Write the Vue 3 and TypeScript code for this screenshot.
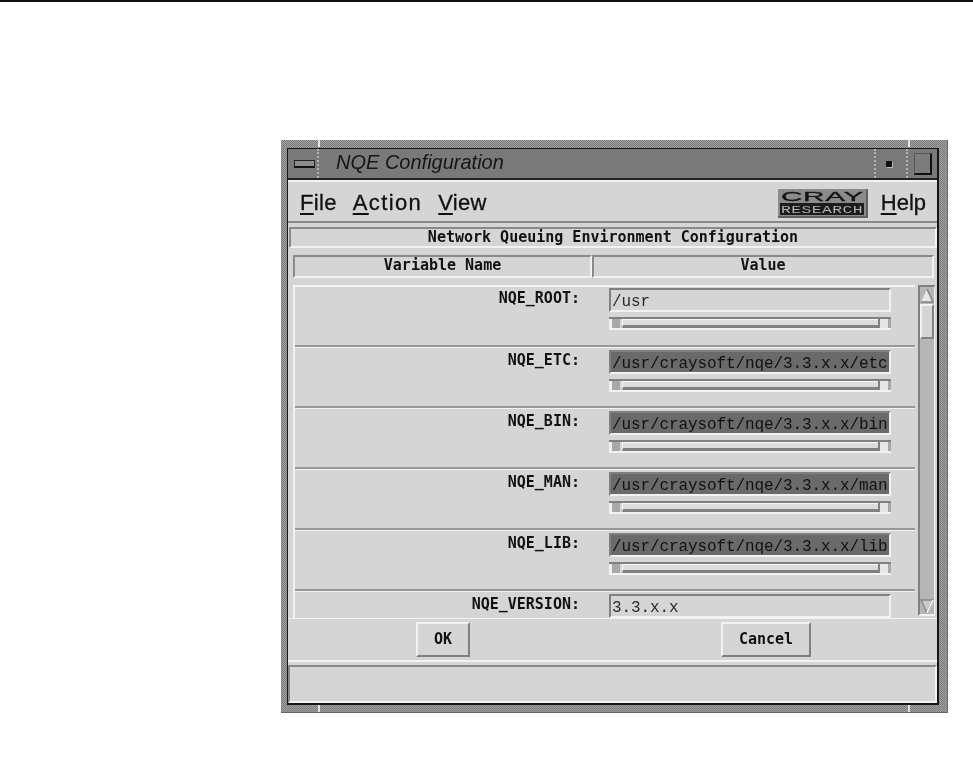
<script setup lang="ts">
interface ConfigRow {
  name: string
  value: string
  locked: boolean
}

const rows: ConfigRow[] = [
  { name: 'NQE_ROOT:', value: '/usr', locked: false },
  { name: 'NQE_ETC:', value: '/usr/craysoft/nqe/3.3.x.x/etc', locked: true },
  { name: 'NQE_BIN:', value: '/usr/craysoft/nqe/3.3.x.x/bin', locked: true },
  { name: 'NQE_MAN:', value: '/usr/craysoft/nqe/3.3.x.x/man', locked: true },
  { name: 'NQE_LIB:', value: '/usr/craysoft/nqe/3.3.x.x/lib', locked: true },
  { name: 'NQE_VERSION:', value: '3.3.x.x', locked: false }
]
</script>

<template>
  <div class="page">
    <div class="rule"></div>
    <div class="window">
      <i class="notch notch-tl"></i>
      <i class="notch notch-tr"></i>
      <i class="notch notch-bl"></i>
      <i class="notch notch-br"></i>
      <div class="client">
        <div class="titlebar">
          <div class="wm-btn wm-menu"><span class="menu-bar"></span></div>
          <div class="title">NQE Configuration</div>
          <div class="wm-btn wm-min"><span class="min-dot"></span></div>
          <div class="wm-btn wm-max"><span class="max-box"></span></div>
        </div>

        <div class="menubar">
          <span class="menu-item"><u>F</u>ile</span>
          <span class="menu-item action-menu"><u>A</u>ction</span>
          <span class="menu-item"><u>V</u>iew</span>
          <svg class="logo" width="90" height="29" viewBox="0 0 90 29">
            <rect width="90" height="29" fill="#8b8b8b" />
            <rect x="88" width="2" height="29" fill="#606060" />
            <rect y="27" width="90" height="2" fill="#606060" />
            <text x="3" y="12" textLength="83" lengthAdjust="spacingAndGlyphs" class="logo-cray">CRAY</text>
            <rect x="2" y="14" width="84" height="12" fill="#1c1c1c" />
            <text x="3" y="24" textLength="82" lengthAdjust="spacingAndGlyphs" class="logo-research">RESEARCH</text>
          </svg>
          <span class="menu-item help"><u>H</u>elp</span>
        </div>

        <div class="banner">Network Queuing Environment Configuration</div>

        <div class="columns">
          <div class="column col-name">Variable Name</div>
          <div class="column col-value">Value</div>
        </div>

        <div class="list">
          <div class="rows">
            <div v-for="row in rows" :key="row.name" class="row">
              <div class="label">{{ row.name }}</div>
              <div class="cell">
                <div class="field" :class="{ locked: row.locked }">{{ row.value }}</div>
                <div class="hscroll">
                  <span class="harrow"></span>
                  <span class="hthumb"></span>
                  <span class="harrow"></span>
                </div>
              </div>
            </div>
          </div>
          <div class="vscroll">
            <svg class="varrow" width="14" height="16" viewBox="0 0 14 16">
              <path d="M1 15 L7 2 L13 15 Z" fill="#e6e6e6" stroke="none" />
              <path d="M7 2 L13 15 L1 15" fill="none" stroke="#858585" stroke-width="1.6" />
            </svg>
            <div class="vthumb"></div>
            <div class="vtrack"></div>
            <svg class="varrow" width="14" height="15" viewBox="0 0 14 15">
              <path d="M1 1 L7 14 L13 1 Z" fill="#c8c8c8" stroke="#858585" stroke-width="1.4" />
              <path d="M7 14 L13 1" fill="none" stroke="#fff" stroke-width="1.4" />
            </svg>
          </div>
        </div>

        <div class="actions">
          <button class="action ok">OK</button>
          <button class="action cancel">Cancel</button>
        </div>

        <div class="status"></div>
      </div>
    </div>
  </div>
</template>

<style>
html,
body {
  margin: 0;
  background: #fff;
}
</style>

<style scoped>
.page {
  width: 973px;
  height: 768px;
  overflow: hidden;
  background: #fff;
}

.rule {
  height: 2px;
  background: #111;
  margin-bottom: 138px;
}

.window {
  position: relative;
  box-sizing: border-box;
  width: 667px;
  height: 573px;
  margin-left: 281px;
  padding: 8px 8px 7px 6px;
  background: repeating-conic-gradient(#7a7a7a 0 25%, #a2a2a2 0 50%) 0 0 / 2px 2px;
  border-right: 1px solid #666;
  border-bottom: 1px solid #666;
  filter: blur(0.35px);
}

.notch {
  position: absolute;
  background: #e4e4e4;
}

.notch-tl { left: 37px; top: 0; width: 2px; height: 7px; }
.notch-tr { left: 627px; top: 0; width: 2px; height: 7px; }
.notch-bl { left: 37px; bottom: 0; width: 2px; height: 7px; }
.notch-br { left: 627px; bottom: 0; width: 2px; height: 7px; }

.client {
  display: flex;
  flex-direction: column;
  height: 100%;
  box-sizing: border-box;
  background: #d5d5d5;
  border: 1px solid #161616;
  border-bottom-width: 2px;
  border-right-width: 2px;
  color: #111;
}

.titlebar {
  display: flex;
  align-items: stretch;
  height: 31px;
  flex: none;
  background: repeating-conic-gradient(#747474 0 25%, #7f7f7f 0 50%) 0 0 / 2px 2px;
  border-bottom: 2px solid #222;
  box-sizing: border-box;
}

.wm-btn {
  display: flex;
  align-items: center;
  justify-content: center;
  flex: none;
  box-sizing: border-box;
  border-right: 2px dotted #b4b4b4;
}

.wm-menu {
  width: 31px;
  padding-left: 4px;
}

.menu-bar {
  width: 19px;
  height: 5px;
  background: #8c8c8c;
  border: 1px solid #222;
  border-bottom: 2px solid #111;
}

.title {
  flex: 1;
  padding-left: 17px;
  font: italic 20px/27px "Liberation Sans", Arial, sans-serif;
  color: #161616;
}

.wm-min {
  width: 34px;
  padding-right: 4px;
  border-left: 2px dotted #b4b4b4;
}

.min-dot {
  width: 6px;
  height: 6px;
  background: #111;
  border-radius: 1px;
  box-shadow: 1px 1px 0 #bbb;
}

.wm-max {
  width: 29px;
  padding-left: 1px;
  border-right: none;
}

.max-box {
  box-sizing: border-box;
  width: 18px;
  height: 22px;
  background: #7c7c7c;
  border: 1px solid #555;
  border-right: 2px solid #111;
  border-bottom: 2px solid #111;
}

.menubar {
  display: flex;
  align-items: center;
  flex: none;
  height: 43px;
  box-sizing: border-box;
  padding: 3px 11px 0 12px;
  gap: 16px;
  border-top: 2px solid #f2f2f2;
  border-bottom: 2px solid #8a8a8a;
  font: 22px/26px "Liberation Sans", Arial, sans-serif;
  letter-spacing: 0.3px;
  -webkit-text-stroke: 0.3px #111;
}

.menu-item u {
  text-underline-offset: 3px;
  text-decoration-thickness: 2px;
}

.action-menu {
  letter-spacing: 1.4px;
}

.logo {
  flex: none;
  margin-left: auto;
  margin-right: -3px;
  -webkit-text-stroke: 0;
}

.help {
  letter-spacing: 0;
}

.logo-cray {
  font: 400 13px "Liberation Sans", Arial, sans-serif;
  fill: #141414;
  stroke: #141414;
  stroke-width: 0.3px;
}

.logo-research {
  font: 400 11px "Liberation Mono", monospace;
  fill: #b0b0b0;
}

.banner {
  flex: none;
  height: 21px;
  box-sizing: border-box;
  margin: 4px 0 0 1px;
  border: 2px solid;
  border-color: #8a8a8a #f2f2f2 #f2f2f2 #8a8a8a;
  text-align: center;
}

.banner,
.column,
.label,
.action {
  font: 700 15px/17px "DejaVu Sans Mono", monospace;
}

.columns {
  display: flex;
  flex: none;
  height: 23px;
  margin: 7px 3px 0 5px;
}

.column {
  box-sizing: border-box;
  text-align: center;
  border: 2px solid;
  border-color: #8a8a8a #f2f2f2 #f2f2f2 #8a8a8a;
}

.col-name {
  width: 299px;
}

.col-value {
  flex: 1;
}

.list {
  display: flex;
  flex: none;
  height: 333px;
  margin: 7px 2px 0 5px;
  gap: 3px;
  overflow: hidden;
}

.rows {
  width: 622px;
  flex: none;
  border-top: 2px solid #f2f2f2;
  border-left: 2px solid #f2f2f2;
  box-sizing: border-box;
}

.row {
  display: flex;
  box-sizing: border-box;
  height: 61px;
  padding-top: 2px;
  border-bottom: 2px solid #989898;
  border-top: 1px solid #f2f2f2;
}

.row:first-child {
  border-top: none;
  padding-top: 1px;
  height: 60px;
}

.label {
  width: 285px;
  flex: none;
  padding-top: 2px;
  text-align: right;
}

.cell {
  width: 282px;
  margin-left: 29px;
  flex: none;
}

.field {
  box-sizing: border-box;
  height: 24px;
  padding-left: 1px;
  border: 2px solid;
  border-color: #808080 #f2f2f2 #f2f2f2 #808080;
  font: 16px/24px "Liberation Mono", monospace;
  letter-spacing: -0.1px;
  color: #2a2a2a;
  white-space: nowrap;
  overflow: hidden;
}

.field.locked {
  background: #6a6a6a;
  color: #111;
}

.hscroll {
  display: flex;
  align-items: stretch;
  box-sizing: border-box;
  height: 13px;
  margin-top: 5px;
  background: #d5d5d5;
  border-top: 2px solid #808080;
  border-bottom: 2px solid #f2f2f2;
}

.harrow {
  width: 13px;
  flex: none;
  box-sizing: border-box;
  background: #a8a8a8;
  border-left: 3px solid #f0f0f0;
  border-right: 2px solid #d5d5d5;
}

.harrow:last-child {
  background: #e6e6e6;
  border-left: 2px solid #808080;
  border-right: 3px solid #a8a8a8;
}

.hthumb {
  flex: 1;
  box-sizing: border-box;
  background: #dcdcdc;
  border-top: 1px solid #f6f6f6;
  border-bottom: 3px solid #808080;
  border-left: 1px solid #f6f6f6;
}

.vscroll {
  display: flex;
  flex-direction: column;
  width: 18px;
  height: 331px;
  flex: none;
  box-sizing: border-box;
  border: 2px solid;
  border-color: #808080 #f2f2f2 #f2f2f2 #808080;
  background: #b6b6b6;
}

.varrow {
  display: block;
  flex: none;
}

.vthumb {
  flex: none;
  height: 35px;
  margin-top: 1px;
  background: #d5d5d5;
  border: 2px solid;
  border-color: #f2f2f2 #808080 #808080 #f2f2f2;
  box-sizing: border-box;
}

.vtrack {
  flex: 1;
}

.actions {
  display: flex;
  align-items: center;
  flex: none;
  height: 44px;
  box-sizing: border-box;
  padding-left: 128px;
  border-top: 1px solid #f2f2f2;
  border-bottom: 2px solid #f2f2f2;
}

.action {
  box-sizing: border-box;
  height: 35px;
  padding: 0;
  background: #d5d5d5;
  border: 2px solid;
  border-color: #f2f2f2 #808080 #808080 #f2f2f2;
  color: #111;
}

.ok {
  width: 54px;
}

.cancel {
  width: 90px;
  margin-left: 251px;
}

.status {
  flex: none;
  height: 38px;
  box-sizing: border-box;
  margin-top: 3px;
  border: 2px solid;
  border-color: #8a8a8a #f2f2f2 #f2f2f2 #8a8a8a;
}
</style>
